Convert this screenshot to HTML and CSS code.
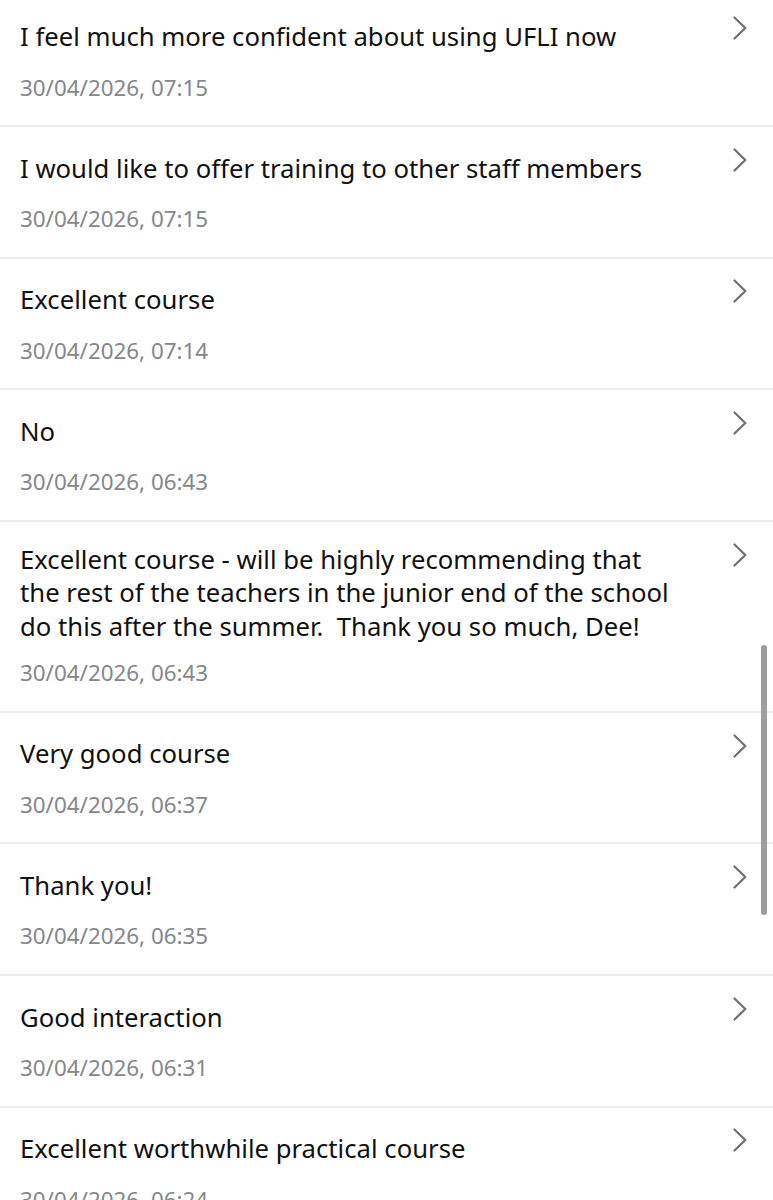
FILE: index.html
```html
<!DOCTYPE html>
<html lang="en">
<head>
<meta charset="utf-8">
<title>Responses</title>
<link rel="stylesheet" href="styles.css">
</head>
<body>
<div class="list">
  <div class="row">
    <div class="content">
      <div class="title">I feel much more confident about using UFLI now</div>
      <div class="date">30/04/2026, 07:15</div>
    </div>
    <svg class="chev" viewBox="0 0 14 24" width="14" height="24"><polyline points="1.5,1.5 12.3,12 1.5,22.5"/></svg>
  </div>
  <div class="row">
    <div class="content">
      <div class="title">I would like to offer training to other staff members</div>
      <div class="date">30/04/2026, 07:15</div>
    </div>
    <svg class="chev" viewBox="0 0 14 24" width="14" height="24"><polyline points="1.5,1.5 12.3,12 1.5,22.5"/></svg>
  </div>
  <div class="row">
    <div class="content">
      <div class="title">Excellent course</div>
      <div class="date">30/04/2026, 07:14</div>
    </div>
    <svg class="chev" viewBox="0 0 14 24" width="14" height="24"><polyline points="1.5,1.5 12.3,12 1.5,22.5"/></svg>
  </div>
  <div class="row">
    <div class="content">
      <div class="title">No</div>
      <div class="date">30/04/2026, 06:43</div>
    </div>
    <svg class="chev" viewBox="0 0 14 24" width="14" height="24"><polyline points="1.5,1.5 12.3,12 1.5,22.5"/></svg>
  </div>
  <div class="row">
    <div class="content">
      <div class="title"><span>Excellent course - will be highly recommending that<br>the rest of the teachers in the junior end of the school<br>do this after the summer.  Thank you so much, Dee!</span></div>
      <div class="date">30/04/2026, 06:43</div>
    </div>
    <svg class="chev" viewBox="0 0 14 24" width="14" height="24"><polyline points="1.5,1.5 12.3,12 1.5,22.5"/></svg>
  </div>
  <div class="row">
    <div class="content">
      <div class="title">Very good course</div>
      <div class="date">30/04/2026, 06:37</div>
    </div>
    <svg class="chev" viewBox="0 0 14 24" width="14" height="24"><polyline points="1.5,1.5 12.3,12 1.5,22.5"/></svg>
  </div>
  <div class="row">
    <div class="content">
      <div class="title">Thank you!</div>
      <div class="date">30/04/2026, 06:35</div>
    </div>
    <svg class="chev" viewBox="0 0 14 24" width="14" height="24"><polyline points="1.5,1.5 12.3,12 1.5,22.5"/></svg>
  </div>
  <div class="row">
    <div class="content">
      <div class="title">Good interaction</div>
      <div class="date">30/04/2026, 06:31</div>
    </div>
    <svg class="chev" viewBox="0 0 14 24" width="14" height="24"><polyline points="1.5,1.5 12.3,12 1.5,22.5"/></svg>
  </div>
  <div class="row">
    <div class="content">
      <div class="title">Excellent worthwhile practical course</div>
      <div class="date">30/04/2026, 06:24</div>
    </div>
    <svg class="chev" viewBox="0 0 14 24" width="14" height="24"><polyline points="1.5,1.5 12.3,12 1.5,22.5"/></svg>
  </div>
</div>
<div class="scrollbar"></div>
</body>
</html>
```
FILE: styles.css
```css
html, body {
  margin: 0;
  padding: 0;
  background: #ffffff;
  height: 1200px;
  overflow: hidden;
}
body {
  font-family: "Noto Sans", "Open Sans", sans-serif;
  position: relative;
}
.list {
  margin-top: -4.5px;
}
.row {
  display: grid;
  grid-template-columns: 1fr 14px;
  column-gap: 12px;
  padding: 20.8px 26px 24.5px 20px;
  border-bottom: 2px solid #ececec;
}
.content {
  min-width: 0;
}
.title {
  display: flex;
  align-items: center;
  min-height: 41.1px;
  font-size: 25.7px;
  line-height: 33.5px;
  color: #111111;
  white-space: pre-wrap;
}
.date {
  margin-top: 17.2px;
  font-size: 22.4px;
  line-height: 26px;
  color: #85878a;
}
.chev {
  margin-top: 0;
  display: block;
}
.chev polyline {
  fill: none;
  stroke: #6f7072;
  stroke-width: 2.2;
  stroke-linecap: round;
  stroke-linejoin: round;
}
.scrollbar {
  position: absolute;
  left: 761px;
  top: 645px;
  width: 6px;
  height: 270px;
  border-radius: 3px;
  background: #9d9d9d;
}
```
